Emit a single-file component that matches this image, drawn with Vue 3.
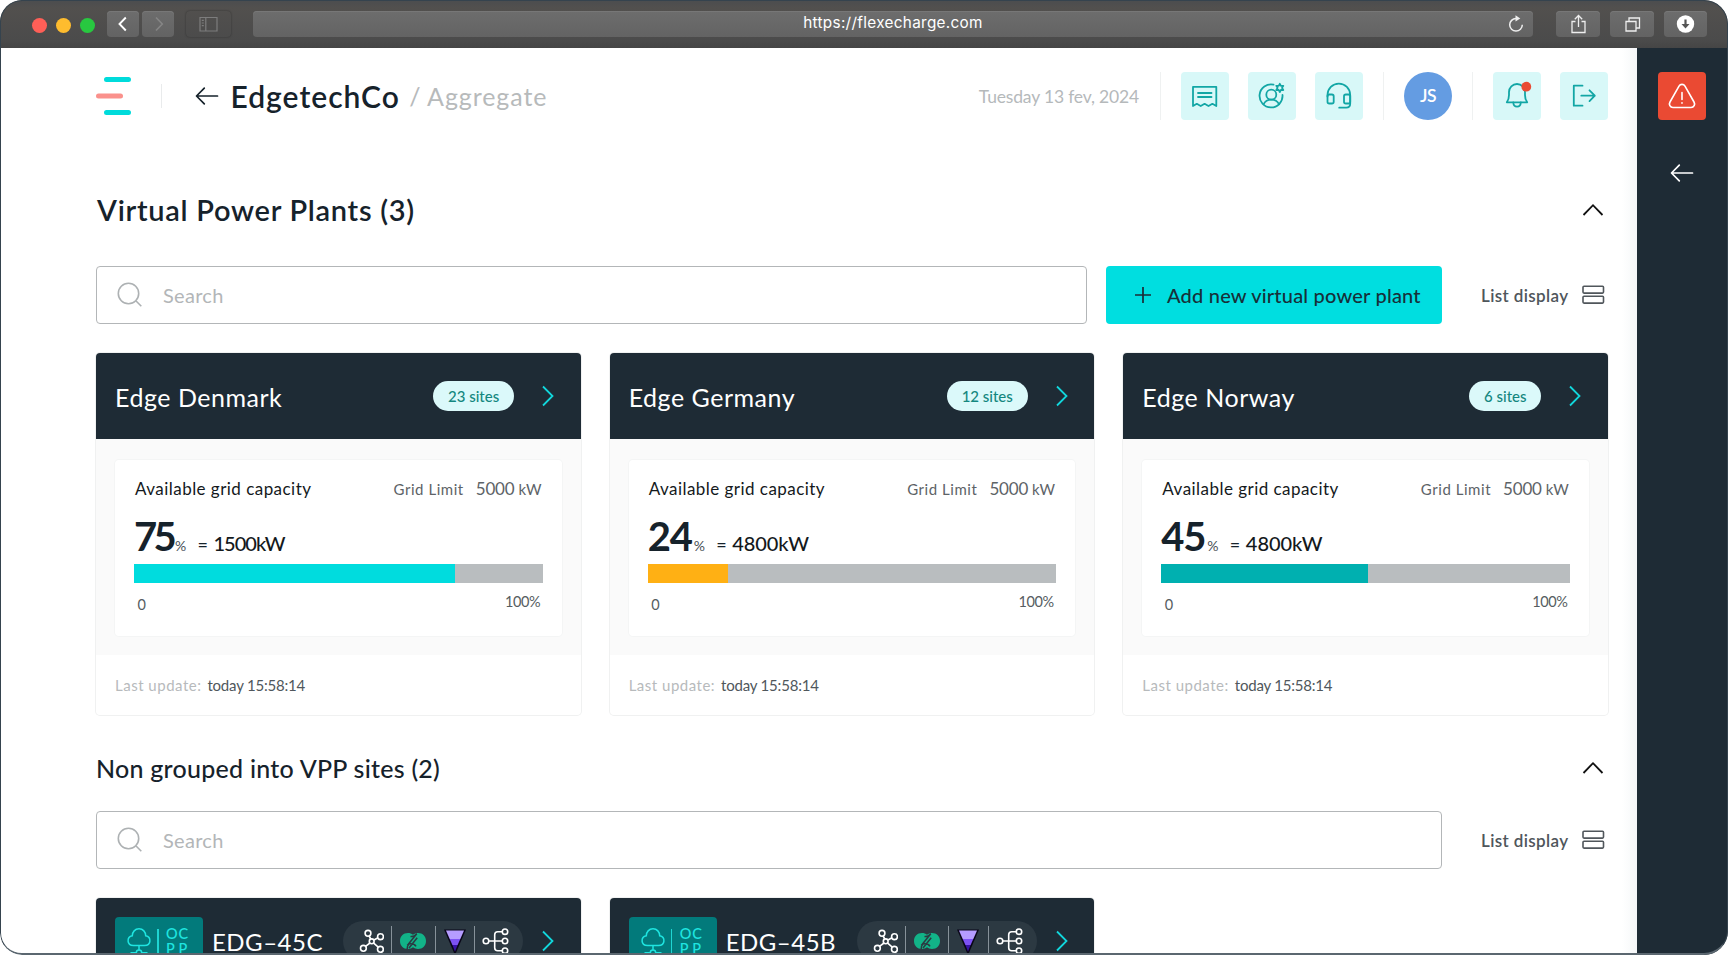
<script setup>
const plants = [
  { name: 'Edge Denmark', sites: 23, percent: 75, power: '1500kW', fill: 78.5, tone: 'cyan', narrow: true },
  { name: 'Edge Germany', sites: 12, percent: 24, power: '4800kW', fill: 19.6, tone: 'amber', narrow: false },
  { name: 'Edge Norway', sites: 6, percent: 45, power: '4800kW', fill: 50.6, tone: 'teal', narrow: false },
]
const sites = ['EDG–45C', 'EDG–45B']
</script>

<template>
  <div class="window">
    <div class="browser">
      <div class="lights"><i class="red"></i><i class="yellow"></i><i class="green"></i></div>
      <div class="nav-btn back">
        <svg width="32" height="26" fill="none" stroke="#fff" stroke-width="1.9"><path d="M18.800 6.500 12.500 13l6.300 6.500" /></svg>
      </div>
      <div class="nav-btn forward">
        <svg width="32" height="26" fill="none" stroke="#858585" stroke-width="1.6"><path d="M14 6.500 20.300 13 14 19.500" /></svg>
      </div>
      <div class="side-btn">
        <svg width="45" height="26" fill="none" stroke="#7d7d7d" stroke-width="1.2"><path d="M14 6.500h17v13.500H14zM19.800 6.500V20M15.800 9.300h2M15.800 12h2M15.800 14.700h2" /></svg>
      </div>
      <div class="address">
        <span>https://flexecharge.com</span>
        <svg class="reload" width="16" height="20" fill="none" stroke="#eee" stroke-width="1.5"><path d="M8 4.500a6.300 6.300 0 1 0 6.300 6.300" /><path d="M7.500 1.200 12.300 4.400 7.500 7.600z" fill="#eee" stroke="none" /></svg>
      </div>
      <div class="tool share">
        <svg width="44" height="26" fill="none" stroke="#eee" stroke-width="1.3"><path d="M19.500 10.500H16v11h13v-11h-3.500M22.500 16V5M18.800 8.200l3.700-3.700 3.700 3.700" /></svg>
      </div>
      <div class="tool tabs">
        <svg width="44" height="26" fill="none" stroke="#eee" stroke-width="1.3"><path d="M16 10.500h10v9.500H16zM19 10V7h10.500v10H26.500" /></svg>
      </div>
      <div class="tool download">
        <svg width="43" height="26"><circle cx="21.500" cy="13" r="8.700" fill="#fff" /><path d="M21.500 8.500V14" stroke="#555" stroke-width="2.200" /><path d="M17.500 13h8l-4 4.500z" fill="#555" /></svg>
      </div>
    </div>

    <div class="page">
      <main>
        <header>
          <svg class="logo" width="36" height="42" stroke-width="5" stroke-linecap="round"><path d="M10.500 4.500h22M10.500 37.500h22" stroke="#00dbdb" /><path d="M2.500 21h22" stroke="#fa918c" /></svg>
          <i class="logo-rule"></i>
          <svg class="back-arrow" width="24" height="20" fill="none" stroke="#16222b" stroke-width="1.700" stroke-linecap="round" stroke-linejoin="round"><path d="M22.500 10H2M9.300 2.200 1.500 10l7.800 7.800" /></svg>
          <h1>EdgetechCo</h1>
          <span class="crumb">/ <em>Aggregate</em></span>
          <span class="date">Tuesday 13 fev, 2024</span>
          <i class="rule r1"></i>
          <div class="icon-btn">
            <svg viewBox="0 0 48 48"><path d="M12 14.800h23.300v19.200l-3.900-2.200-3.900 2.200-3.900-2.200-3.900 2.200-3.900-2.200-3.800 2.200z" /><path d="M17 21h13.500M17 25h13.500" /></svg>
          </div>
          <div class="icon-btn">
            <svg viewBox="0 0 48 48"><path d="M25.500 12.700a11.500 11.500 0 1 0 9 10.300" /><circle cx="23.300" cy="22.700" r="5" /><path d="M15.500 32.300c1.500-3 4.500-4.700 7.800-4.700s6.300 1.700 7.800 4.700" /><path d="m31.800 11.800 1.100 2.100 2.400-.1-1.300 2.100 1.300 2.100-2.400-.1-1.100 2.100-1.100-2.100-2.400.1 1.300-2.100-1.300-2.100 2.400.1z" /></svg>
          </div>
          <div class="icon-btn">
            <svg viewBox="0 0 48 48"><path d="M12.500 24.500V23a11.300 11.300 0 0 1 22.700 0v8.500c0 2.500-1.200 4.200-4 4.200h-7" /><rect x="12.500" y="22.500" width="6.200" height="9" rx="1.800" /><rect x="29" y="22.500" width="6.200" height="9" rx="1.800" /></svg>
          </div>
          <i class="rule r2"></i>
          <div class="avatar">JS</div>
          <i class="rule r3"></i>
          <div class="icon-btn">
            <svg viewBox="0 0 48 48"><path d="M13.800 30.300c1.700-2.300 2.200-4.300 2.200-7.300v-3a8 8 0 0 1 16 0v3c0 3 .5 5 2.200 7.300z" /><path d="M20.300 30.500c.3 5.500 7.200 5.500 7.500 0" /><circle class="dot" cx="33.300" cy="14.700" r="4.900" /></svg>
          </div>
          <div class="icon-btn last">
            <svg viewBox="0 0 48 48"><path d="M22.500 13.700h-8.700v20h8.700M21.300 23.700h13.500M29.500 18.300l5.300 5.400-5.300 5.400" /></svg>
          </div>
        </header>

        <div class="section-title">
          <h2>Virtual Power Plants (3)</h2>
          <svg width="22" height="14" fill="none" stroke="#111" stroke-width="1.800"><path d="M1.500 12 11 2.200 20.500 12" /></svg>
        </div>
        <div class="toolbar">
          <div class="search">
            <svg width="26" height="26" fill="none" stroke="#adb1b3" stroke-width="1.600"><circle cx="11.500" cy="11.500" r="10.200" /><path d="m18.800 18.800 5.500 5.500" /></svg>
            <span>Search</span>
          </div>
          <button class="add">
            <svg width="18" height="18" fill="none" stroke="#1c2b35" stroke-width="1.700"><path d="M9 1v16M1 9h16" /></svg>
            <span>Add new virtual power plant</span>
          </button>
          <div class="display">
            <span>List display</span>
            <svg width="23" height="20" fill="none" stroke="#50565b" stroke-width="1.600"><rect x="1" y="1.300" width="20.500" height="6.800" rx="1" /><rect x="1" y="11.300" width="20.500" height="6.800" rx="1" /></svg>
          </div>
        </div>

        <div class="cards">
          <article v-for="p in plants" :key="p.name" class="card">
            <div class="card-head">
              <h3>{{ p.name }}</h3>
              <span class="pill">{{ p.sites }} sites</span>
              <svg class="go" width="12" height="22" fill="none" stroke="#12d7dc" stroke-width="1.800"><path d="M1 1.500 10.500 11 1 20.500" /></svg>
            </div>
            <div class="card-body">
              <div class="panel">
                <div class="panel-top">
                  <span class="label">Available grid capacity</span>
                  <span class="limit">Grid Limit</span>
                  <span class="amount">5000</span>
                  <span class="unit">kW</span>
                </div>
                <div class="reading" :class="{ narrow: p.narrow }">
                  <strong>{{ p.percent }}</strong><small>%</small><span class="eq">=</span><span class="power">{{ p.power }}</span>
                </div>
                <div class="track"><div class="fill" :class="p.tone" :style="{ width: p.fill + '%' }"></div></div>
                <div class="scale"><span class="zero">0</span><span>100%</span></div>
              </div>
            </div>
            <div class="card-foot"><span class="muted">Last update:</span><span class="time">today 15:58:14</span></div>
          </article>
        </div>

        <div class="section-title second">
          <h2>Non grouped into VPP sites (2)</h2>
          <svg width="22" height="14" fill="none" stroke="#111" stroke-width="1.800"><path d="M1.500 12 11 2.200 20.500 12" /></svg>
        </div>
        <div class="toolbar">
          <div class="search">
            <svg width="26" height="26" fill="none" stroke="#adb1b3" stroke-width="1.600"><circle cx="11.500" cy="11.500" r="10.200" /><path d="m18.800 18.800 5.500 5.500" /></svg>
            <span>Search</span>
          </div>
          <div class="display">
            <span>List display</span>
            <svg width="23" height="20" fill="none" stroke="#50565b" stroke-width="1.600"><rect x="1" y="1.300" width="20.500" height="6.800" rx="1" /><rect x="1" y="11.300" width="20.500" height="6.800" rx="1" /></svg>
          </div>
        </div>

        <div class="cards">
          <article v-for="s in sites" :key="s" class="card">
            <div class="card-head">
              <div class="badge">
                <svg width="24" height="32" fill="none" stroke="#1fe5e0" stroke-width="1.500"><path d="M6.500 18.500c-7 0-7-8.500-1.200-9.700C5.300 5 8 1.800 12 1.800s6.700 3.200 6.700 7c5.800 1.200 5.800 9.700-1.200 9.700zM12 18.500V23M3.500 25.800h5.700M14.800 25.800h5.700" /><circle cx="12" cy="25.800" r="2.700" /></svg>
                <i></i>
                <div class="ocpp"><b>O</b><b>C</b><b>P</b><b>P</b></div>
              </div>
              <h3 class="site">{{ s }}</h3>
              <div class="protocols">
                <svg width="26" height="28" fill="none" stroke="#fff" stroke-width="1.600"><circle cx="10" cy="6.300" r="2.900" /><circle cx="22.500" cy="9.700" r="2.900" /><circle cx="5.400" cy="21.300" r="2.900" /><circle cx="22.400" cy="22.300" r="2.900" /><circle cx="13.700" cy="14.300" r="2.400" /><path d="m11.100 9 1.700 3M16 13l4-2.200M15.700 16.200l4.500 4M12 16l-4.500 3.300" /></svg>
                <i></i>
                <svg class="wide" width="28" height="28"><path d="M9 6c2 0 3.500.6 5 1.700C15.500 6.600 17 6 19 6c4.800 0 8 3.500 8 8s-3.200 8-8 8c-2 0-3.500-.6-5-1.700C12.500 21.400 11 22 9 22c-4.800 0-8-3.500-8-8s3.200-8 8-8z" fill="#12b388" /><path d="M11.500 9.500c3 .6 4.500-.7 6.300-2.700L9.500 17c2.500-.4 6-.2 7.500 2.300M9.800 17.200C8.500 18.500 8 20 8.200 22M18.200 10.700 10 21" fill="none" stroke="#2c3942" stroke-width="1.500" /></svg>
                <i></i>
                <svg width="24" height="28"><path d="M1 2.500h22L12.500 27h-1z" fill="#090618" /><path d="M3 3.500h18L17.300 12H6.700z" fill="#b59cff" /><path d="M6.700 12h10.600l-2.700 6H9.400z" fill="#7d52f4" /><path d="M9.400 18h5.200L12 24.500z" fill="#3712a5" /></svg>
                <i></i>
                <svg width="28" height="28" fill="none" stroke="#fff" stroke-width="1.600"><circle cx="4" cy="14" r="2.800" /><circle cx="23" cy="4.700" r="2.700" /><circle cx="23" cy="14" r="2.700" /><circle cx="23" cy="23.700" r="2.700" /><path d="M6.800 14h13.500M20.300 4.700h-4.600q-3 0-3 3v13q0 3 3 3h4.600" /></svg>
              </div>
              <svg class="go" width="12" height="22" fill="none" stroke="#12d7dc" stroke-width="1.800"><path d="M1 1.500 10.500 11 1 20.500" /></svg>
            </div>
          </article>
        </div>
      </main>

      <aside>
        <div class="alert">
          <svg width="48" height="48" fill="none" stroke="#fff" stroke-width="1.600" stroke-linecap="round"><path d="M21 14.200c1.400-2.400 4.600-2.400 6 0l9 15.800c1.400 2.400 0 5.500-3 5.500H15c-3 0-4.400-3.100-3-5.500zM24 20.500v7" /><circle cx="24" cy="31" r=".3" /></svg>
        </div>
        <svg width="24" height="20" fill="none" stroke="#fff" stroke-width="1.700" stroke-linecap="round" stroke-linejoin="round"><path d="M22.500 10H2M9.300 2.200 1.500 10l7.800 7.800" /></svg>
      </aside>
    </div>
  </div>
</template>

<style>
body { margin: 0; background: #fff; overflow: hidden; }
</style>

<style scoped>
.window { position: relative; width: 1728px; height: 955px; box-sizing: border-box; overflow: hidden; border-radius: 22px 24px 24px 22px; background: #fff; font-family: Lato, "Open Sans", sans-serif; color: #16222b; display: flex; flex-direction: column; }
.window::after { content: ""; position: absolute; inset: 0; border: 1px solid #35434e; border-bottom: 2px solid #5b6770; border-radius: inherit; pointer-events: none; }
svg { display: block; flex: none; }
h1, h2, h3 { margin: 0; white-space: nowrap; }

.browser { height: 48px; flex: none; display: flex; padding-top: 11px; box-sizing: border-box; background: linear-gradient(#4b4d4f 0, #52504e 8px, #4b4b4b 40px, #454545); }
.lights { display: flex; gap: 9px; margin: 7px 0 0 32px; }
.lights i { width: 15px; height: 15px; border-radius: 50%; }
.red { background: #ff5f57; }
.yellow { background: #febc2e; }
.green { background: #28c840; }
.nav-btn, .tool, .address { height: 26px; border-radius: 4px; background: linear-gradient(#6d6d6d, #636363); box-shadow: inset 0 1px #777; }
.back { margin-left: 12px; width: 32px; }
.forward { margin-left: 3px; width: 32px; }
.side-btn { margin-left: 12px; width: 45px; height: 26px; border-radius: 4px; box-shadow: 0 0 2px #303030; }
.address { margin-left: 22px; width: 1280px; position: relative; text-align: center; color: #fff; font: 15.300px/24px Inter, sans-serif; letter-spacing: .32px; box-sizing: border-box; }
.reload { position: absolute; right: 9px; top: 3px; }
.tool { width: 44px; }
.share { margin-left: 23px; }
.tabs { margin-left: 10px; }
.download { margin-left: 10px; width: 43px; }

.page { flex: 1; min-height: 0; display: flex; }
main { width: 1637px; box-sizing: border-box; padding: 24px 29px 0 96px; background: linear-gradient(90deg, #fff 1622px, #f5f7f8); overflow: hidden; }
header { height: 48px; display: flex; align-items: center; margin-bottom: 71px; white-space: nowrap; }
.logo-rule { width: 1px; height: 24px; background: #e9ebec; margin-left: 29px; }
.back-arrow { margin-left: 32.500px; }
h1 { font-size: 30px; line-height: 36px; font-weight: 600; letter-spacing: 1px; margin-left: 12px; }
.crumb { font-size: 25px; line-height: 30px; color: #b7babb; margin-left: 9.500px; }
.crumb em { font-style: normal; letter-spacing: .92px; }
.date { margin-left: auto; font-size: 17.500px; line-height: 24px; padding-top: 1px; color: #b5b9bb; letter-spacing: -.17px; }
.rule { width: 1px; height: 48px; background: #eff1f1; }
.r1 { margin: 0 20px 0 21px; }
.r2 { margin: 0 20px 0 1px; }
.r3 { margin: 0 20px; }
.icon-btn { width: 48px; height: 48px; border-radius: 4px; background: #d8f8f8; margin-right: 19px; }
.icon-btn.last { margin-right: 0; }
.icon-btn svg { width: 48px; height: 48px; fill: none; stroke: #12a6a5; stroke-width: 1.800px; stroke-linecap: round; stroke-linejoin: round; }
.icon-btn .dot { fill: #ea4a33; stroke: none; }
.avatar { width: 48px; height: 48px; border-radius: 50%; background: #649ce2; color: #fff; font-size: 17.500px; font-weight: 600; line-height: 48px; text-align: center; letter-spacing: -.500px; }

.section-title { height: 36px; display: flex; justify-content: space-between; align-items: center; padding: 1px 4px 0 1px; margin-bottom: 38px; }
h2 { font-size: 29px; line-height: 36px; font-weight: 600; letter-spacing: .72px; }
.second { margin: 33px 0 26px; padding-left: 0; }
.second h2 { font-size: 25px; font-weight: 500; letter-spacing: .25px; padding-top: 1px; }
.second svg { margin-top: 1px; }
.toolbar { display: flex; height: 58px; margin-bottom: 29px; }
.search { flex: 1; box-sizing: border-box; border: 1px solid #b3b6b8; border-radius: 4px; display: flex; align-items: center; padding-left: 20px; font-size: 20px; color: #b3b6b8; letter-spacing: .3px; background: #fff; }
.search span { margin-left: 20px; line-height: 24px; font-weight: 400; }
.add { width: 336px; margin-left: 19.500px; border: 0; border-radius: 4px; background: #00dee0; display: flex; align-items: center; gap: 15.500px; padding: 0 0 0 27.500px; font: 500 20px/24px Lato, sans-serif; color: #173039; letter-spacing: .2px; white-space: nowrap; }
.display { width: 166px; box-sizing: border-box; padding: 0 3px 0 39px; display: flex; align-items: center; justify-content: space-between; font-size: 17px; font-weight: 600; letter-spacing: .38px; color: #4f565b; white-space: nowrap; }

.cards { display: grid; grid-template-columns: repeat(3, 1fr); column-gap: 29px; }
.card { border-radius: 4px; box-shadow: 0 0 0 1px #f0f1f1; background: #fff; }
.card-head { height: 86px; box-sizing: border-box; border-radius: 4px 4px 0 0; background: #1e2b35; display: flex; align-items: center; padding: 0 26.500px 0 19px; }
h3 { font-size: 25px; line-height: 30px; font-weight: 400; color: #fff; letter-spacing: .52px; padding-top: 2px; }
.pill { margin-left: auto; padding: 0 15px; height: 30px; border-radius: 15px; background: #dbf9fa; color: #14877f; font-size: 15px; font-weight: 500; line-height: 30px; }
.go { margin-left: 28px; }
.card-body { height: 216px; box-sizing: border-box; background: #fafafa; padding: 21px 19px 19px; }
.panel { height: 176px; box-sizing: border-box; background: #fff; border-radius: 4px; padding: 19px 19px 0; box-shadow: 0 0 0 1px #f4f5f5; }
.panel-top { height: 20px; display: flex; align-items: baseline; line-height: 20px; color: #5d6367; white-space: nowrap; }
.label { font-size: 17px; color: #14191c; letter-spacing: .46px; margin-left: 1px; }
.limit { margin-left: auto; font-size: 15px; letter-spacing: .55px; }
.amount { margin-left: 12px; font-size: 17px; letter-spacing: -.2px; }
.unit { margin-left: 4px; margin-right: 1px; font-size: 15px; letter-spacing: .2px; }
.reading { margin-top: 16.500px; height: 40px; display: flex; align-items: baseline; line-height: 40px; white-space: nowrap; }
.reading strong { font-size: 40px; letter-spacing: -1.200px; font-weight: 700; }
.reading small { font-size: 14px; margin-left: 2px; width: 22.500px; color: #4a5156; }
.reading .eq { font-size: 18px; width: 16px; }
.reading .power { font-size: 20px; font-weight: 500; color: #14191c; letter-spacing: -.050px; }
.narrow strong { letter-spacing: -3.700px; }
.narrow .power { letter-spacing: -1px; }
.track { height: 19px; margin-top: 8.500px; background: #b9bdbf; }
.fill { height: 19px; }
.cyan { background: #00dcde; }
.amber { background: #ffb014; }
.teal { background: #00b0b0; }
.scale { margin-top: 9px; display: flex; justify-content: space-between; padding: 0 2.500px 0 3.500px; font-size: 14.500px; line-height: 20px; color: #565d61; letter-spacing: -.400px; }
.zero { padding-top: 3px; }
.card-foot { height: 60px; display: flex; align-items: center; padding-left: 19px; font-size: 15px; }
.muted { color: #b7babc; letter-spacing: .5px; }
.time { margin-left: 6px; color: #50575c; letter-spacing: -.200px; }

.badge { width: 88px; height: 48px; border-radius: 4px; background: #027a7b; display: flex; align-items: flex-start; padding: 10px 0 0 12px; box-sizing: border-box; }
.badge i { width: 1.500px; height: 25px; background: #1fd5d2; margin: 2px 0 0 6px; }
.ocpp { display: grid; grid-template-columns: 12.500px 12px; margin: 0 0 0 7.500px; line-height: 14.500px; }
.ocpp b { font-size: 14.500px; font-weight: 500; color: #1fe5e0; }
h3.site { font-size: 24px; letter-spacing: .5px; margin-left: 9px; }
.protocols { margin-left: auto; width: 180px; height: 40px; border-radius: 20px; background: #2c3942; display: flex; align-items: center; justify-content: space-between; box-sizing: border-box; padding: 0 13px 0 15px; }
.protocols i { width: 1px; height: 30px; background: #87929a; }
.protocols + .go { margin-left: 19px; }

aside { flex: 1; background: #1e2b35; display: flex; flex-direction: column; align-items: center; padding: 24px 1px 0 0; }
.alert { width: 48px; height: 48px; border-radius: 4px; background: #ea4a33; margin-bottom: 43px; }
</style>
